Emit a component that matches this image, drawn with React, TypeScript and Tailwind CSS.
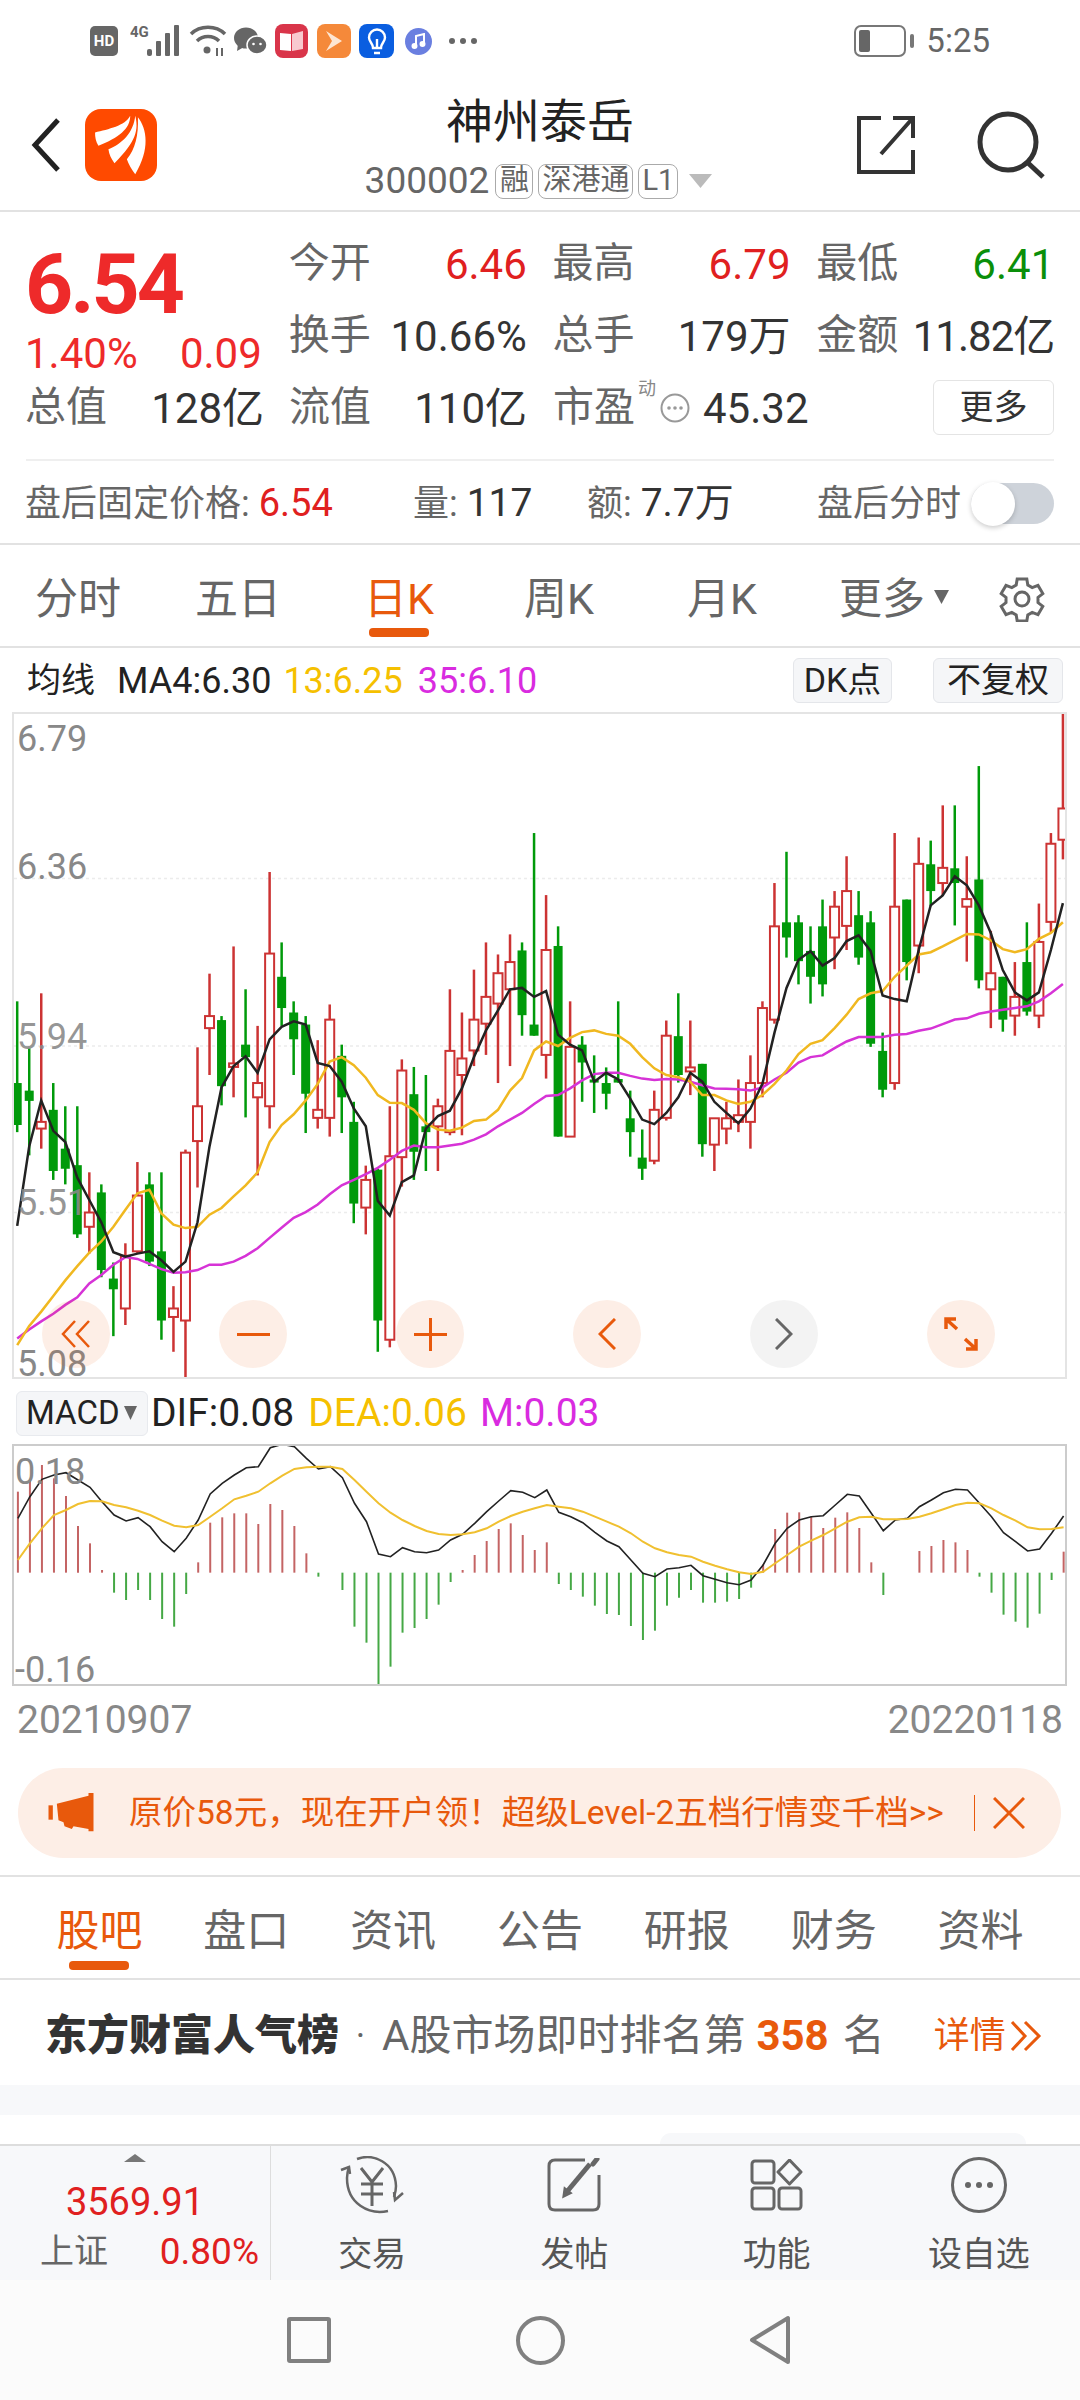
const FONT = "font-['Roboto','Noto_Sans_CJK_SC',sans-serif]"

// candles sampled off the chart: colour, wick top, body top, body bottom, wick bottom
const candles: [string, number, number, number, number][] = [
  ['g',675,858,952,968],['g',780,875,898,1020],['r',657,945,960,1005],['g',858,918,1055,1075],['g',910,1005,1050,1085],
  ['g',910,1042,1197,1205],['r',1058,1148,1180,1240],['g',1085,1103,1277,1293],['g',1260,1296,1320,1425],['r',1217,1245,1363,1400],
  ['r',1035,1110,1235,1240],['g',1058,1085,1258,1268],['g',1058,1235,1390,1433],['r',1313,1363,1382,1460],['r',1007,1014,1390,1522],
  ['r',778,910,988,1092],['r',613,708,735,840],['g',708,717,865,908],['r',552,814,822,890],['g',648,772,800,935],
  ['r',730,858,890,1065],['r',385,568,910,960],['g',543,620,690,730],['g',675,700,760,840],['g',708,727,882,970],
  ['r',762,918,936,960],['r',682,716,936,978],['g',772,797,890,970],['g',900,945,1128,1172],['r',1043,1075,1137,1197],
  ['g',1050,1052,1390,1460],['r',910,1022,1433,1450],['r',805,830,1024,1090],['g',822,883,1012,1075],['g',840,955,968,1055],
  ['r',893,910,955,1055],['r',648,786,968,975],['r',700,803,840,975],['r',604,716,785,820],['r',543,665,725,795],
  ['r',570,612,680,858],['r',525,587,648,820],['g',543,561,706,752],['g',298,727,752,752],['r',437,560,795,848],
  ['g',507,551,978,978],['r',675,777,978,978],['g',753,772,812,900],['g',796,850,857,925],['g',823,858,882,917],
  ['g',675,849,857,857],['g',875,937,968,1023],['g',962,1025,1050,1075],['r',875,918,1032,1040],['r',718,752,936,942],
  ['g',657,753,840,857],['r',718,823,832,885],['g',815,815,995,1023],['r',937,937,996,1055],['r',900,937,960,995],
  ['r',850,930,945,968],['r',796,858,945,1005],['r',675,690,858,890],['r',410,507,716,725],['g',340,498,532,577],
  ['g',482,498,585,637],['g',507,562,620,680],['g',447,507,637,664],['r',428,463,532,603],['r',350,428,506,560],
  ['g',428,482,577,593],['g',473,498,770,777],['g',745,786,873,890],['r',298,463,858,873],['g',447,447,587,628],
  ['r',308,367,550,612],['g',315,368,428,462],['r',236,376,410,437],['g',236,377,410,505],['r',350,446,463,586],
  ['g',148,402,628,646],['r',517,612,648,735],['g',620,620,716,743],['r',587,665,707,752],['g',498,587,698,707],
  ['r',456,542,707,735],['r',298,322,497,520],['r',28,243,313,357],
]

const ma4 = [1178,1000,897,965,990,1070,1120,1170,1237,1247,1240,1235,1255,1281,1258,1170,1000,868,820,798,835,760,732,720,727,813,820,855,915,955,1122,1155,1080,1065,960,932,920,870,800,740,695,648,645,665,652,750,772,785,855,835,850,893,940,950,925,890,835,855,900,925,948,915,860,745,645,582,563,595,578,540,527,562,662,670,675,560,460,438,395,415,460,522,605,655,673,655,560,455]
const ma13 = [1445,1402,1370,1335,1300,1268,1238,1213,1180,1142,1105,1097,1150,1175,1183,1180,1153,1138,1112,1087,1058,990,952,928,897,860,810,800,818,846,885,902,903,918,948,962,965,958,943,940,918,875,847,785,765,775,757,744,740,748,752,770,800,825,840,845,855,885,885,897,905,900,885,860,830,793,770,762,735,705,670,657,652,620,595,570,565,552,538,524,525,538,558,565,558,535,522,498]
const ma35 = [1430,1410,1392,1375,1355,1338,1307,1288,1265,1248,1252,1263,1275,1283,1282,1277,1265,1265,1258,1245,1228,1205,1182,1160,1147,1130,1107,1087,1075,1062,1048,1030,1010,998,1002,1002,998,994,985,973,955,940,925,905,887,885,870,852,838,835,835,842,848,851,849,850,855,863,870,871,872,875,868,850,835,812,800,796,780,765,755,755,755,750,748,741,736,726,716,713,703,698,694,690,686,675,657,636]

// macd bars, 518 is the zero line
const macdBars = [275,240,195,235,288,378,430,510,578,600,570,600,657,680,582,487,368,352,340,340,372,312,330,378,460,530,518,570,680,728,855,800,698,684,657,614,546,510,465,423,387,370,405,450,427,552,570,590,617,642,645,678,720,692,617,593,570,608,608,605,597,563,493,387,338,337,350,384,353,337,384,487,585,518,518,453,438,420,427,450,530,578,644,665,683,641,540,455]
const dif = [355,290,238,225,218,240,262,305,345,363,353,380,425,455,415,360,282,250,225,203,200,143,133,140,175,207,200,233,310,365,462,470,443,455,458,450,420,403,370,335,303,272,277,293,270,337,350,368,397,423,440,480,520,530,507,503,496,527,538,548,554,540,495,430,385,360,350,347,315,283,288,340,392,360,355,320,300,278,268,270,310,350,398,425,453,447,400,348]
const dea = [480,430,385,345,330,312,303,304,315,322,332,345,362,377,382,375,350,325,298,287,275,250,227,207,202,200,200,207,240,275,310,338,360,378,393,402,405,403,397,385,365,348,335,325,315,320,325,335,350,365,380,400,425,445,457,465,470,485,497,508,517,522,515,490,465,440,422,405,385,365,352,350,358,358,357,350,340,328,315,308,310,325,345,362,382,388,387,382]

const kx = (i: number) => 17.2 + i * 12.02
const ky = (v: number) => 700 + v / 2.24
const mx = (i: number) => 17.9 + i * 12.02
const my = (v: number) => 1400 + v / 3

const kLine = (vals: number[]) => vals.map((v, i) => `${kx(i).toFixed(1)},${ky(v).toFixed(1)}`).join(' ')
const mLine = (vals: number[]) => vals.map((v, i) => `${mx(i).toFixed(1)},${my(v).toFixed(1)}`).join(' ')

const KChart = () => (
  <svg viewBox="14 714 1051 663" className="block w-full h-full">
    {[878.6, 1046, 1212.5].map((y) => (
      <line key={y} x1="14" x2="1065" y1={y} y2={y} stroke="#ececec" strokeWidth="1.5" strokeDasharray="3 3" />
    ))}
    {candles.map(([c, wt, bt, bb, wb], i) => {
      const x = kx(i)
      const col = c === 'r' ? '#cc3333' : '#009a0a'
      return (
        <g key={i}>
          <line x1={x} x2={x} y1={ky(wt)} y2={ky(wb)} stroke={col} strokeWidth="2.5" />
          {c === 'r' ? (
            <rect x={x - 4.5} y={ky(bt)} width="9" height={ky(bb) - ky(bt)} fill="#fff" stroke={col} strokeWidth="2" />
          ) : (
            <rect x={x - 4.5} y={ky(bt)} width="9" height={ky(bb) - ky(bt)} fill={col} />
          )}
        </g>
      )
    })}
    <polyline points={kLine(ma35)} fill="none" stroke="#d633d6" strokeWidth="2.5" />
    <polyline points={kLine(ma13)} fill="none" stroke="#f0b820" strokeWidth="2.5" />
    <polyline points={kLine(ma4)} fill="none" stroke="#222" strokeWidth="2.5" />
  </svg>
)

const MacdChart = () => (
  <svg viewBox="14 1446 1051 238" className="block w-full h-full">
    {macdBars.map((v, i) =>
      v === 518 ? null : (
        <line key={i} x1={mx(i)} x2={mx(i)} y1={my(518)} y2={my(v)} stroke={v < 518 ? '#c46464' : '#45a845'} strokeWidth="2" />
      ),
    )}
    <polyline points={mLine(dif)} fill="none" stroke="#222" strokeWidth="1.6" />
    <polyline points={mLine(dea)} fill="none" stroke="#f0c030" strokeWidth="2" />
  </svg>
)

const Stat = ({ label, value, color }: { label: string; value: string; color: string }) => (
  <div className="flex w-[238px] h-[72px] items-center justify-between">
    <span className="text-[41px] text-[#666]">{label}</span>
    <span className={`text-[42px] ${color}`}>{value}</span>
  </div>
)

const Tab = ({ label, active, barGap }: { label: string; active?: boolean; barGap: string }) => (
  <div className="flex flex-col items-center">
    <span className={`h-[50px] flex items-center text-[43px] whitespace-nowrap ${active ? 'text-[#e8590c]' : 'text-[#666]'}`}>{label}</span>
    {active && <div className={`w-[60px] h-[9px] rounded-[4px] bg-[#e8590c] ${barGap}`} />}
  </div>
)

const Badge = ({ text, w }: { text: string; w: string }) => (
  <span className={`h-[35px] ${w} flex items-center justify-center rounded-lg border border-[#aaa] text-[29px] text-[#666]`}>{text}</span>
)

const RoundBtn = ({ gray, children }: { gray?: boolean; children: React.ReactNode }) => (
  <div className={`w-[68px] h-[68px] rounded-full flex items-center justify-center ${gray ? 'bg-[#888]/10' : 'bg-[#e8590c]/10'}`}>
    {children}
  </div>
)

const Logo = () => (
  <div className="w-[72px] h-[72px] rounded-[16px] bg-[#ff4a00]">
    <svg viewBox="30 30 215 215" className="w-full h-full" fill="#fff">
      <path d="M60 100C100 90 150 80 165 50C165 90 130 115 70 140C62 125 60 115 60 100Z" />
      <path d="M100 150C140 135 175 100 180 50C190 90 185 125 118 192C108 178 102 165 100 150Z" />
      <path d="M155 180C180 150 190 110 188 55C215 90 225 150 180 225C170 212 160 195 155 180Z" />
    </svg>
  </div>
)

const StatusBar = () => (
  <div className="h-[80px] pt-[2px] flex items-center pl-[90px] pr-[90px]">
    <div className="w-[28px] h-[30px] rounded-[5px] bg-[#666] text-white text-[15px] font-bold flex items-center justify-center">HD</div>
    <svg width="52" height="32" viewBox="0 0 52 32" className="ml-[12px]" fill="#666">
      <text x="0" y="12" fontSize="15" fontWeight="700">4G</text>
      <rect x="17" y="24" width="5" height="7" rx="2" />
      <rect x="26" y="16" width="5" height="15" rx="1" />
      <rect x="35" y="8" width="5" height="23" rx="1" />
      <rect x="44" y="0" width="5" height="31" rx="1" />
    </svg>
    <svg width="38" height="32" viewBox="0 0 38 32" className="ml-[7px]" fill="none" stroke="#666" strokeWidth="3.5">
      <path d="M2 9C11 0 27 0 36 9" />
      <path d="M8 16C14 10 24 10 30 16" />
      <circle cx="18" cy="25" r="3.5" fill="#666" stroke="none" />
      <path d="M28 23V31M33 23V31" strokeWidth="2" />
    </svg>
    <svg width="33" height="28" viewBox="0 0 33 28" className="ml-[7px]" fill="#666">
      <ellipse cx="12" cy="11" rx="12" ry="10.5" />
      <path d="M4 17L3 24L10 20Z" />
      <ellipse cx="23" cy="18" rx="10" ry="9" stroke="#fff" strokeWidth="1.5" />
      <circle cx="19.5" cy="17" r="1.3" fill="#fff" />
      <circle cx="26.5" cy="17" r="1.3" fill="#fff" />
    </svg>
    <div className="ml-[8px] w-[33px] h-[34px] rounded-[8px] bg-[#d9354a] flex items-center justify-center">
      <svg width="25" height="22" viewBox="0 0 25 22">
        <path d="M1 3L12 4V21L1 20Z" fill="#fff" />
        <path d="M13 4L24 1V19L13 21Z" fill="#f8c9cf" />
      </svg>
    </div>
    <div className="ml-[9px] w-[34px] h-[34px] rounded-[8px] bg-[#f5893a] flex items-center justify-center">
      <svg width="20" height="24" viewBox="0 0 20 24">
        <path d="M2 2L18 12L2 22L8 12Z" fill="#fde6d3" />
      </svg>
    </div>
    <div className="ml-[8px] w-[35px] h-[34px] rounded-[8px] bg-[#0a5ee0] flex items-center justify-center">
      <svg width="20" height="27" viewBox="0 0 20 27" fill="none" stroke="#fff" strokeWidth="2.4">
        <path d="M6 20C6 15 2 14 2 9.500A8 8 0 0 1 18 9.500C18 14 14 15 14 20Z" />
        <path d="M7 25H13M10 20V11" />
      </svg>
    </div>
    <div className="ml-[11px] w-[27px] h-[27px] rounded-full bg-[#6a7fe0] flex items-center justify-center">
      <svg width="15" height="16" viewBox="0 0 15 16" fill="none" stroke="#fff" strokeWidth="2">
        <path d="M5 13V3L13 1V11" />
        <circle cx="3.500" cy="13" r="2" fill="#fff" />
        <circle cx="11.500" cy="11" r="2" fill="#fff" />
      </svg>
    </div>
    <div className="ml-[17px] flex gap-[5px]">
      <span className="w-[6px] h-[6px] rounded-full bg-[#666]" />
      <span className="w-[6px] h-[6px] rounded-full bg-[#666]" />
      <span className="w-[6px] h-[6px] rounded-full bg-[#666]" />
    </div>
    <svg width="61" height="32" viewBox="0 0 61 32" className="ml-auto" fill="none">
      <rect x="1" y="1" width="50" height="30" rx="6" stroke="#777" strokeWidth="2" />
      <rect x="5" y="5" width="11" height="22" rx="2" fill="#666" />
      <rect x="56" y="9" width="4" height="14" rx="2" fill="#777" />
    </svg>
    <span className="ml-[11px] text-[33px] text-[#666]">5:25</span>
  </div>
)

const Header = () => (
  <div className="h-[132px] border-b-2 border-[#e2e2e2] grid grid-cols-[1fr_auto_1fr]">
    <div className="flex items-center pl-[31px]">
      <svg width="30" height="54" viewBox="0 0 30 54" fill="none" stroke="#222" strokeWidth="5">
        <path d="M27 2L4 27L27 52" />
      </svg>
      <div className="ml-[24px]">
        <Logo />
      </div>
    </div>
    <div className="flex flex-col items-center pt-[12px]">
      <span className="h-[60px] flex items-center text-[47px] text-[#222]">神州泰岳</span>
      <div className="mt-[9px] -ml-[3px] h-[40px] flex items-center">
        <span className="text-[37px] text-[#666]">300002</span>
        <div className="ml-[6px] flex gap-[5px]">
          <Badge text="融" w="w-[38px]" />
          <Badge text="深港通" w="w-[95px]" />
          <Badge text="L1" w="w-[40px]" />
        </div>
        <svg width="23" height="14" viewBox="0 0 23 14" className="ml-[11px]" fill="#bbb">
          <path d="M0 0H23L11.500 14Z" />
        </svg>
      </div>
    </div>
    <div className="flex items-center justify-end pr-[33px]">
      <svg width="58" height="58" viewBox="0 0 58 58" fill="none" stroke="#333" strokeWidth="4">
        <path d="M24 2H2V56H56V34" />
        <path d="M24 38L55 3M36 2H56V22" />
      </svg>
      <svg width="70" height="68" viewBox="0 0 70 68" className="ml-[62px]" fill="none" stroke="#333" strokeWidth="5">
        <circle cx="31" cy="31" r="28" />
        <path d="M50 51L66 66" />
      </svg>
    </div>
  </div>
)

const Quote = () => (
  <div className="h-[333px] border-b-2 border-[#e2e2e2]">
    <div className="pl-[25px] pr-[26px] pt-[16px]">
      <div className="flex h-[144px]">
        <div className="w-[237px] mr-[27px]">
          <div className="mt-[22px] mb-[15px] h-[70px] flex items-center text-[84px] font-bold text-[#ee2a2a] leading-[70px] tracking-[-3px]">6.54</div>
          <div className="h-[37px] flex items-center justify-between text-[42px] leading-[37px] text-[#ee2a2a]">
            <span>1.40%</span>
            <span>0.09</span>
          </div>
        </div>
        <div className="grid grid-cols-3 grid-rows-2 gap-x-[26px] h-[144px] w-[766px]">
          <Stat label="今开" value="6.46" color="text-[#e02020]" />
          <Stat label="最高" value="6.79" color="text-[#e02020]" />
          <Stat label="最低" value="6.41" color="text-[#0a8f0a]" />
          <Stat label="换手" value="10.66%" color="text-[#333]" />
          <Stat label="总手" value="179万" color="text-[#333]" />
          <Stat label="金额" value="11.82亿" color="text-[#333] tracking-[-1px]" />
        </div>
      </div>
      <div className="flex items-center h-[72px]">
        <div className="w-[239px] mr-[25px] flex items-center justify-between">
          <span className="text-[41px] text-[#666]">总值</span>
          <span className="text-[42px] text-[#333]">128亿</span>
        </div>
        <div className="w-[238px] mr-[26px] flex items-center justify-between">
          <span className="text-[41px] text-[#666]">流值</span>
          <span className="text-[42px] text-[#333]">110亿</span>
        </div>
        <span className="text-[41px] text-[#666]">市盈</span>
        <span className="ml-[3px] w-[18px] self-start mt-[6px] text-[18px] leading-[22px] text-[#888]">动</span>
        <svg width="30" height="30" viewBox="0 0 30 30" className="ml-[4px]" fill="#999">
          <circle cx="15" cy="15" r="13.500" fill="none" stroke="#999" strokeWidth="2" />
          <circle cx="9" cy="15" r="1.800" />
          <circle cx="15" cy="15" r="1.800" />
          <circle cx="21" cy="15" r="1.800" />
        </svg>
        <span className="ml-[13px] text-[42px] text-[#333]">45.32</span>
        <div className="ml-auto -mt-[2px] w-[121px] h-[55px] rounded-md border border-[#e4e4e4] flex items-center justify-center text-[34px] text-[#333]">更多</div>
      </div>
    </div>
    <div className="mx-[26px] mt-[15px] h-[2px] bg-[#efefef]" />
    <div className="h-[82px] pt-[3px] pl-[25px] pr-[26px] flex items-center text-[36px] whitespace-nowrap">
      <div className="w-[388px] text-[#666]">
        盘后固定价格: <span className="text-[38px] text-[#e02020]">6.54</span>
      </div>
      <div className="w-[174px] text-[#666]">
        量: <span className="text-[39px] text-[#333]">117</span>
      </div>
      <div className="w-[230px] text-[#666]">
        额: <span className="text-[39px] text-[#333]">7.7万</span>
      </div>
      <span className="text-[#666]">盘后分时</span>
      <div className="ml-[10px] w-[83px] h-[41px] rounded-full bg-[#ced3da]">
        <div className="w-[44px] h-[44px] -mt-[1px] rounded-full bg-white shadow-[0_2px_5px_rgba(0,0,0,0.2)]" />
      </div>
    </div>
  </div>
)

const KTabs = () => (
  <div className="h-[103px] border-b-2 border-[#e2e2e2] pt-[29px] flex items-start">
    <div className="ml-[35px]"><Tab label="分时" barGap="" /></div>
    <div className="ml-[74px]"><Tab label="五日" barGap="" /></div>
    <div className="ml-[83px]"><Tab label="日K" active barGap="mt-[4px]" /></div>
    <div className="ml-[90px]"><Tab label="周K" barGap="" /></div>
    <div className="ml-[93px]"><Tab label="月K" barGap="" /></div>
    <div className="ml-[82px] flex items-center h-[50px]">
      <Tab label="更多" barGap="" />
      <svg width="15" height="14" viewBox="0 0 15 14" className="ml-[9px] -mt-[4px]" fill="#666">
        <path d="M0 0H15L7.500 14Z" />
      </svg>
    </div>
    <svg width="48" height="48" viewBox="0 0 24 24" className="ml-[49px]" fill="none" stroke="#666" strokeWidth="1.500">
      <path d="M9.600 2.500h4.800l.5 3 2.200 1.300 2.900-1.100 2.400 4.100-2.400 1.900v2.600l2.400 1.900-2.400 4.100-2.900-1.100-2.200 1.300-.5 3H9.600l-.5-3-2.200-1.300-2.900 1.100-2.400-4.100 2.400-1.900v-2.600L1.600 9.800 4 5.700l2.900 1.100 2.200-1.300z" />
      <circle cx="12" cy="12.500" r="3.500" />
    </svg>
  </div>
)

const MaRow = () => (
  <div className="h-[64px] pt-[1px] flex items-center pl-[27px] pr-[17px] text-[36px]">
    <span className="text-[34px] text-[#222]">均线</span>
    <span className="ml-[22px] text-[#222]">MA4:6.30</span>
    <span className="ml-[12px] text-[#f5c000]">13:6.25</span>
    <span className="ml-[15px] text-[#d92be0]">35:6.10</span>
    <div className="ml-auto w-[99px] h-[45px] rounded-md border border-[#e4e6ea] bg-[#f5f6f8] flex items-center justify-center text-[34px] text-[#222]">DK点</div>
    <div className="ml-[41px] w-[130px] h-[45px] rounded-md border border-[#e4e6ea] bg-[#f5f6f8] flex items-center justify-center text-[34px] text-[#222]">不复权</div>
  </div>
)

const KChartPanel = () => (
  <div className="relative mx-[12px] w-[1055px] h-[667px] border-2 border-[#e4e4e4]">
    <KChart />
    <span className="absolute left-[3px] top-[7px] text-[36px] leading-[36px] text-[#888]">6.79</span>
    <span className="absolute left-[3px] top-[135px] text-[36px] leading-[36px] text-[#888]">6.36</span>
    <span className="absolute left-[3px] top-[305px] text-[36px] leading-[36px] text-[#888]/90">5.94</span>
    <span className="absolute left-[3px] top-[471px] text-[36px] leading-[36px] text-[#888]/90">5.51</span>
    <span className="absolute left-[3px] top-[632px] text-[36px] leading-[36px] text-[#888]">5.08</span>
    <div className="absolute left-[28px] bottom-[9px] w-[953px] flex justify-between">
      <RoundBtn>
        <svg width="30" height="30" viewBox="0 0 30 30" fill="none" stroke="#e8590c" strokeWidth="2.500">
          <path d="M14 2L2 15L14 28M28 2L16 15L28 28" />
        </svg>
      </RoundBtn>
      <RoundBtn>
        <div className="w-[33px] h-[3px] bg-[#e8590c]" />
      </RoundBtn>
      <RoundBtn>
        <svg width="33" height="33" viewBox="0 0 33 33" stroke="#e8590c" strokeWidth="3">
          <path d="M0 16.500H33M16.500 0V33" />
        </svg>
      </RoundBtn>
      <RoundBtn>
        <svg width="18" height="32" viewBox="0 0 18 32" fill="none" stroke="#e8590c" strokeWidth="3">
          <path d="M17 1L2 16L17 31" />
        </svg>
      </RoundBtn>
      <RoundBtn gray>
        <svg width="18" height="32" viewBox="0 0 18 32" fill="none" stroke="#666" strokeWidth="3">
          <path d="M1 1L16 16L1 31" />
        </svg>
      </RoundBtn>
      <RoundBtn>
        <svg width="34" height="34" viewBox="0 0 34 34" fill="none" stroke="#e8590c" strokeWidth="3.500">
          <path d="M2 12V2H12M2 2L13 12M32 22V32H22M32 32L21 22" />
        </svg>
      </RoundBtn>
    </div>
  </div>
)

const MacdRow = () => (
  <div className="h-[65px] flex items-center pl-[16px] pt-[3px] text-[39px]">
    <div className="w-[132px] h-[45px] rounded-md bg-[#f5f6f8] border border-[#e8eaee] flex items-center pl-[9px] text-[33px] text-[#222]">
      MACD
      <svg width="13" height="14" viewBox="0 0 13 14" className="ml-[4px]" fill="#666">
        <path d="M0 0H13L6.500 14Z" />
      </svg>
    </div>
    <span className="ml-[3px] text-[#222]">DIF:0.08</span>
    <span className="ml-[14px] text-[#f5c000]">DEA:0.06</span>
    <span className="ml-[13px] text-[#d92be0]">M:0.03</span>
  </div>
)

const MacdPanel = () => (
  <div className="relative mx-[12px] w-[1055px] h-[242px] border-2 border-[#ccc]">
    <MacdChart />
    <span className="absolute left-[1px] top-[8px] text-[36px] leading-[36px] text-[#888]">0.18</span>
    <span className="absolute left-[1px] top-[206px] text-[36px] leading-[36px] text-[#888]">-0.16</span>
  </div>
)

const Banner = () => (
  <div className="ml-[18px] w-[1043px] h-[90px] rounded-full bg-[#fdeee6] flex items-center">
    <svg width="46" height="40" viewBox="55 40 135 120" className="ml-[30px] shrink-0" fill="#e8590c">
      <rect x="55" y="77" width="13" height="43" />
      <path d="M80 72L175 48V40H190V155H175V148L130 140L125 148L103 140L100 128L85 122Z" />
    </svg>
    <span className="ml-[35px] w-[814px] shrink-0 text-[33.500px] text-[#e8590c] whitespace-nowrap">原价58元，现在开户领！超级Level-2五档行情变千档&gt;&gt;</span>
    <div className="ml-[31px] w-[1px] h-[36px] bg-[#e8590c]" />
    <svg width="32" height="32" viewBox="0 0 32 32" className="ml-[18px]" stroke="#e8590c" strokeWidth="3">
      <path d="M1 1L31 31M31 1L1 31" />
    </svg>
  </div>
)

const InfoTabs = () => (
  <div className="mt-[17px] h-[105px] border-y-2 border-[#e2e2e2] px-[26px] pt-[29px] grid grid-cols-7 items-start">
    {['股吧', '盘口', '资讯', '公告', '研报', '财务', '资料'].map((t, i) => (
      <Tab key={t} label={t} active={i === 0} barGap="mt-[5px]" />
    ))}
  </div>
)

const Rank = () => (
  <div className="h-[105px] pt-[6px] pl-[45px] flex items-center whitespace-nowrap">
    <span className="text-[42px] font-black text-[#333] tracking-[0px]">东方财富人气榜</span>
    <span className="w-[43px] text-center text-[36px] text-[#666]">·</span>
    <span className="text-[42px] text-[#666]">A股市场即时排名第</span>
    <span className="ml-[11px] text-[42px] font-bold text-[#e8590c]">358</span>
    <span className="ml-[14px] text-[42px] text-[#666]">名</span>
    <span className="ml-[49px] text-[36px] text-[#e8590c]">详情</span>
    <svg width="32" height="32" viewBox="0 0 32 32" className="ml-[4px]" fill="none" stroke="#e8590c" strokeWidth="3">
      <path d="M2 2L15 16L2 30M15 2L29 16L15 30" />
    </svg>
  </div>
)

const BottomItem = ({ label, children }: { label: string; children: React.ReactNode }) => (
  <div className="flex flex-col items-center">
    <div className="h-[60px] mt-[9px] flex items-center">{children}</div>
    <span className="mt-[19px] h-[40px] flex items-center text-[34px] text-[#555]">{label}</span>
  </div>
)

const BottomBar = () => (
  <div className="h-[136px] border-t-2 border-[#ddd] bg-[#f7f8fa] flex">
    <div className="w-[271px] border-r border-[#ddd] flex flex-col items-center">
      <div className="mt-[8px] w-0 h-0 border-x-[11px] border-x-transparent border-b-[8px] border-b-[#777]" />
      <span className="mt-[18px] h-[44px] flex items-center text-[38px] text-[#e02020]">3569.91</span>
      <div className="w-full pl-[40px] pr-[11px] flex items-center justify-between">
        <span className="text-[34px] text-[#666]">上证</span>
        <span className="text-[37px] text-[#e02020]">0.80%</span>
      </div>
    </div>
    <div className="flex-1 grid grid-cols-4">
      <BottomItem label="交易">
        <svg width="66" height="58" viewBox="0 0 66 58" fill="none" stroke="#666" strokeWidth="2.500">
          <path d="M18 3C34-3 56 6 57 30C57 34 56 38 55 41" />
          <path d="M49 57C30 61 8 50 8 24C8 20 9 16 10 13" transform="translate(0 -2)" />
          <path d="M2 14L10 11L11 18M64 37L56 44L55 36" />
          <path d="M22 12L33 26L44 12M22 28H44M22 38H44M33 26V50" strokeWidth="3" />
        </svg>
      </BottomItem>
      <BottomItem label="发帖">
        <svg width="54" height="54" viewBox="0 0 54 54" fill="none" stroke="#666" strokeWidth="3">
          <path d="M38 2H8C4 2 2 4 2 8V46C2 50 4 52 8 52H46C50 52 52 50 52 46V17" />
          <path d="M18 36L43 6" strokeWidth="5" />
          <path d="M17 38L18 31L23 35Z" fill="#666" />
          <path d="M46 6L50 1" strokeWidth="5" strokeLinecap="round" />
        </svg>
      </BottomItem>
      <BottomItem label="功能">
        <svg width="53" height="52" viewBox="0 0 53 52" fill="none" stroke="#666" strokeWidth="3">
          <rect x="2" y="2" width="22" height="22" rx="3" />
          <rect x="2" y="29" width="22" height="21" rx="3" />
          <rect x="29" y="29" width="22" height="21" rx="3" />
          <path d="M39.500 1L51 13L39.500 25L28 13Z" strokeLinejoin="round" />
        </svg>
      </BottomItem>
      <BottomItem label="设自选">
        <svg width="56" height="56" viewBox="0 0 56 56" fill="#666">
          <circle cx="28" cy="28" r="26.500" fill="none" stroke="#666" strokeWidth="3" />
          <circle cx="17" cy="28" r="3" />
          <circle cx="28" cy="28" r="3" />
          <circle cx="39" cy="28" r="3" />
        </svg>
      </BottomItem>
    </div>
  </div>
)

const NavBar = () => (
  <div className="h-[120px] bg-[#fbfbfb] flex items-center pl-[287px]">
    <div className="w-[44px] h-[46px] rounded-[3px] border-4 border-[#808080]" />
    <div className="ml-[185px] w-[49px] h-[49px] rounded-full border-4 border-[#808080]" />
    <svg width="42" height="50" viewBox="0 0 42 50" className="ml-[184px]" fill="none" stroke="#808080" strokeWidth="4" strokeLinejoin="round">
      <path d="M39 3V47L3 25Z" />
    </svg>
  </div>
)

const App = () => {
  return (
    <div className={`w-[1080px] h-[2400px] overflow-hidden bg-white ${FONT}`}>
      <StatusBar />
      <Header />
      <Quote />
      <KTabs />
      <MaRow />
      <KChartPanel />
      <MacdRow />
      <MacdPanel />
      <div className="h-[68px] px-[17px] flex items-center justify-between text-[39px] text-[#888]">
        <span>20210907</span>
        <span>20220118</span>
      </div>
      <div className="h-[14px]" />
      <Banner />
      <InfoTabs />
      <Rank />
      <div className="h-[30px] bg-[#f7f8fa]" />
      <div className="h-[29px] pt-[18px] pl-[660px]">
        <div className="w-[366px] h-[11px] rounded-t-[24px] bg-[#f7f8fa]" />
      </div>
      <BottomBar />
      <NavBar />
    </div>
  )
}

export default App
